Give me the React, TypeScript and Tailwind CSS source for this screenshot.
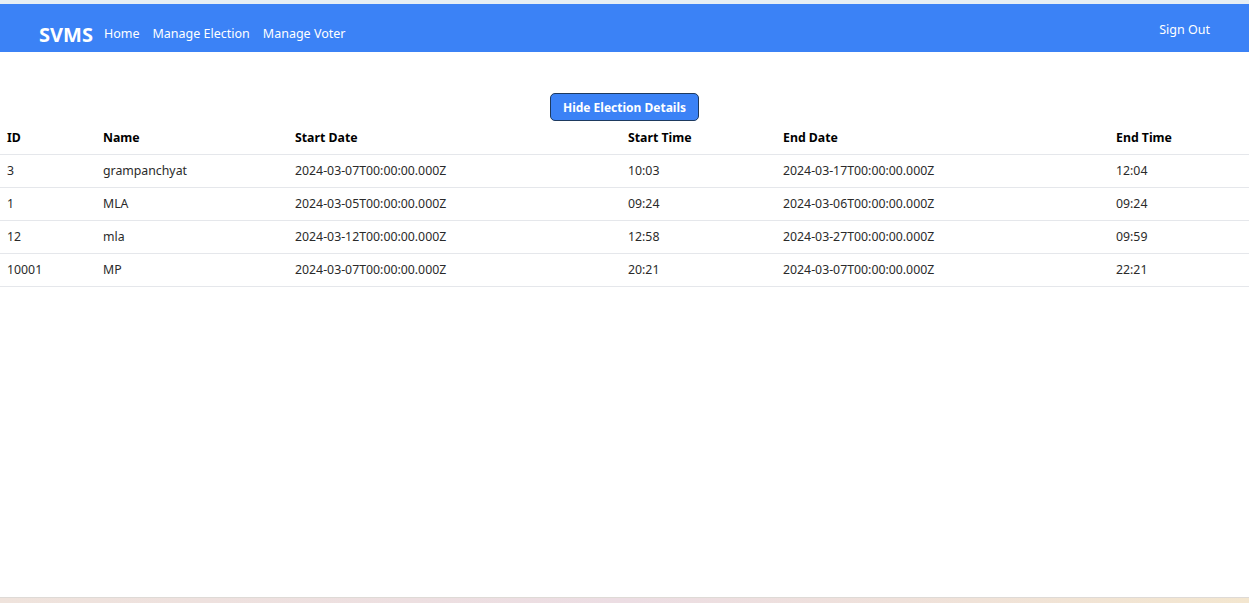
const elections = [
  { id: "3", name: "grampanchyat", startDate: "2024-03-07T00:00:00.000Z", startTime: "10:03", endDate: "2024-03-17T00:00:00.000Z", endTime: "12:04" },
  { id: "1", name: "MLA", startDate: "2024-03-05T00:00:00.000Z", startTime: "09:24", endDate: "2024-03-06T00:00:00.000Z", endTime: "09:24" },
  { id: "12", name: "mla", startDate: "2024-03-12T00:00:00.000Z", startTime: "12:58", endDate: "2024-03-27T00:00:00.000Z", endTime: "09:59" },
  { id: "10001", name: "MP", startDate: "2024-03-07T00:00:00.000Z", startTime: "20:21", endDate: "2024-03-07T00:00:00.000Z", endTime: "22:21" },
]

const Navbar = () => (
  <nav className="bg-[#3b82f6] h-12 flex items-center justify-between pt-[13px] pl-[39px] pr-[39px] text-white">
    <div className="flex items-center">
      <span className="text-[20px] font-bold mr-[11px]">SVMS</span>
      <a className="text-[12.5px] mr-[13px]">Home</a>
      <a className="text-[12.5px] mr-[13px]">Manage Election</a>
      <a className="text-[12.5px]">Manage Voter</a>
    </div>
    <a className="text-[12.5px] -mt-[8px]">Sign Out</a>
  </nav>
)

export default function App() {
  return (
    <div className="min-h-[603px] flex flex-col bg-white font-['Noto_Sans',sans-serif] text-[#2a2a2a]">
      <div className="h-1 bg-[#e6eef4]" />
      <Navbar />
      <main className="flex flex-col items-center pt-[41px]">
        <button className="h-[28px] px-[12px] pt-[1px] rounded-[5px] border border-[#1e3a5f] bg-[#3b82f6] text-white text-[12px] font-bold">
          Hide Election Details
        </button>
        <table className="w-full table-fixed text-[12.3px] border-collapse">
          <colgroup>
            <col className="w-[96px]" />
            <col className="w-[192px]" />
            <col className="w-[333px]" />
            <col className="w-[155px]" />
            <col className="w-[333px]" />
            <col className="w-[140px]" />
          </colgroup>
          <thead>
            <tr className="h-[33px] border-b border-[#e5e7eb] text-black">
              {["ID", "Name", "Start Date", "Start Time", "End Date", "End Time"].map((h) => (
                <th key={h} className="text-left font-bold pl-[7px] pt-[2px]">{h}</th>
              ))}
            </tr>
          </thead>
          <tbody>
            {elections.map((e) => (
              <tr key={e.id} className="h-[33px] border-b border-[#e5e7eb]">
                <td className="pl-[7px] pt-[2px]">{e.id}</td>
                <td className="pl-[7px] pt-[2px]">{e.name}</td>
                <td className="pl-[7px] pt-[2px]">{e.startDate}</td>
                <td className="pl-[7px] pt-[2px]">{e.startTime}</td>
                <td className="pl-[7px] pt-[2px]">{e.endDate}</td>
                <td className="pl-[7px] pt-[2px]">{e.endTime}</td>
              </tr>
            ))}
          </tbody>
        </table>
      </main>
      <div className="flex-1" />
      <div className="h-[6px] border-t border-[#dedad6] bg-gradient-to-r from-[#efe3dc] via-[#ecdde3] to-[#f3e6cf]" />
    </div>
  )
}
